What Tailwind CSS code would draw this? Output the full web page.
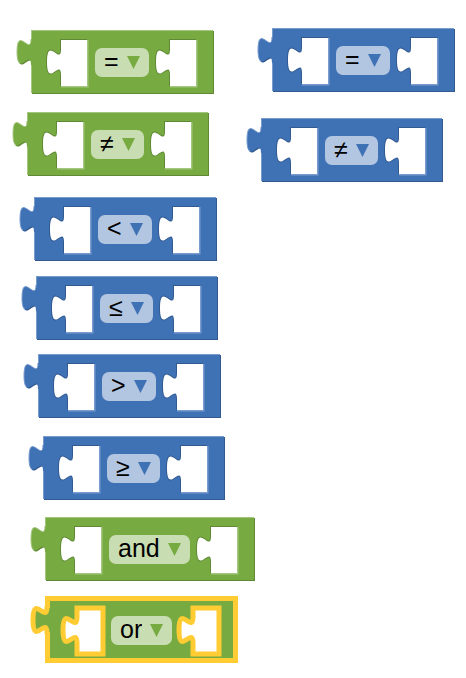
<!DOCTYPE html>
<html lang="en">
<head>
<meta charset="utf-8">
<meta name="viewport" content="width=device-width, initial-scale=1">
<title>Block workspace</title>
<script src="https://cdn.jsdelivr.net/npm/@tailwindcss/browser@4"></script>
</head>
<body class="bg-white">
<main id="workspace" class="relative min-h-screen w-full overflow-hidden bg-white" style="font-family:'Liberation Sans',Arial,sans-serif"></main>
<script>
const themes = {
  green: {
    body: 'bg-[#77ab41] border-[#a4c680] shadow-[1px_1px_0_#5f8934]',
    fill: 'fill-[#77ab41]', dark: 'stroke-[#5f8934]', darkFill: 'fill-[#5f8934]', light: 'stroke-[#a4c680]',
    field: 'bg-[#c9ddb3]'
  },
  blue: {
    body: 'bg-[#3f71b5] border-[#799cce] shadow-[1px_1px_0_#325a91]',
    fill: 'fill-[#3f71b5]', dark: 'stroke-[#325a91]', darkFill: 'fill-[#325a91]', light: 'stroke-[#799cce]',
    field: 'bg-[#b2c6e1]'
  }
};

const compare = ['=', '≠', '<', '≤', '>', '≥'];
const blocks = [
  { x: 31,  y: 30,  theme: 'green', value: '=',   options: ['=', '≠'] },
  { x: 272, y: 28,  theme: 'blue',  value: '=',   options: compare },
  { x: 27,  y: 112, theme: 'green', value: '≠',   options: ['=', '≠'] },
  { x: 261, y: 118, theme: 'blue',  value: '≠',   options: compare },
  { x: 34,  y: 197, theme: 'blue',  value: '<',   options: compare },
  { x: 36,  y: 276, theme: 'blue',  value: '≤',   options: compare },
  { x: 38,  y: 354, theme: 'blue',  value: '>',   options: compare },
  { x: 43,  y: 436, theme: 'blue',  value: '≥',   options: compare },
  { x: 45,  y: 517, theme: 'green', value: 'and', options: ['and', 'or'] },
  { x: 47,  y: 598, theme: 'green', value: 'or',  options: ['and', 'or'], selected: true }
];

const tabCurve = 'c0 17.5 -14 -14 -14 13s14 -4.5 14 13';
const holePath = 'M14 0H40V46H14V35c0 -17.5 -14 14 -14 -13s14 4.5 14 -13Z';

function tab(t, selected) {
  const edges = selected
    ? `<path class="${t.fill}" d="M18 10H15V9${tabCurve}V34H18Z"/><path class="fill-none stroke-[#ffcc33]" stroke-width="5" d="M15 8V9${tabCurve}V36"/>`
    : `<path class="${t.darkFill}" transform="translate(1 1)" d="M15 9${tabCurve}Z"/>
       <path class="${t.fill}" d="M17 9H15${tabCurve}H17Z"/>
       <path class="fill-none ${t.light}" stroke-width="1" d="M15 9c0 17.5 -14 -14 -14 13c0 6 1 10 3 11"/>`;
  return `<svg class="absolute -left-4 -top-px h-11 w-[18px] overflow-visible" viewBox="0 0 18 44" aria-hidden="true">${edges}</svg>`;
}

function socket(t, selected) {
  const edges = selected
    ? `<path class="fill-white stroke-[#ffcc33]" stroke-width="5" d="${holePath}"/>`
    : `<path class="fill-none ${t.dark}" stroke-width="2" d="M40 0H14V9c0 17.5 -14 -14 -14 13c0 27 14 -4.5 14 13V46"/>
       <path class="fill-none ${t.light}" stroke-width="3" d="M40 0V46H14"/>
       <path class="fill-white" d="${holePath}"/>`;
  return `<svg class="h-[46px] w-10 shrink-0 overflow-visible" viewBox="0 0 40 46" aria-hidden="true">${edges}</svg>`;
}

document.getElementById('workspace').innerHTML = blocks.map(b => {
  const t = themes[b.theme];
  const frame = b.selected ? 'outline-[5px] outline-[#ffcc33] -outline-offset-3 border-transparent bg-[#77ab41]' : t.body;
  const options = b.options.map(o => `<option${o === b.value ? ' selected' : ''}>${o.replace('<', '&lt;')}</option>`).join('');
  return `<div class="absolute flex items-start border-t border-l pt-[9px] pr-[17px] pb-[7px] pl-[15px] ${frame}" style="left:${b.x}px;top:${b.y}px">
    ${tab(t, b.selected)}
    ${socket(t, b.selected)}
    <label class="mt-2 mr-[7px] ml-2 flex h-[29px] items-center gap-2 rounded-[7px] pr-[9px] pl-[9px] ${t.field}">
      <select aria-label="Operator" class="mb-[3px] field-sizing-content h-7 appearance-none border-0 bg-transparent p-0 text-[25px] leading-7 text-black">${options}</select>
      <svg class="h-[13px] w-[13px] shrink-0 ${t.fill}" viewBox="0 0 13 13" aria-hidden="true"><path d="M0 0H13L6.5 13Z"/></svg>
    </label>
    ${socket(t, b.selected)}
  </div>`;
}).join('');
</script>
</body>
</html>
